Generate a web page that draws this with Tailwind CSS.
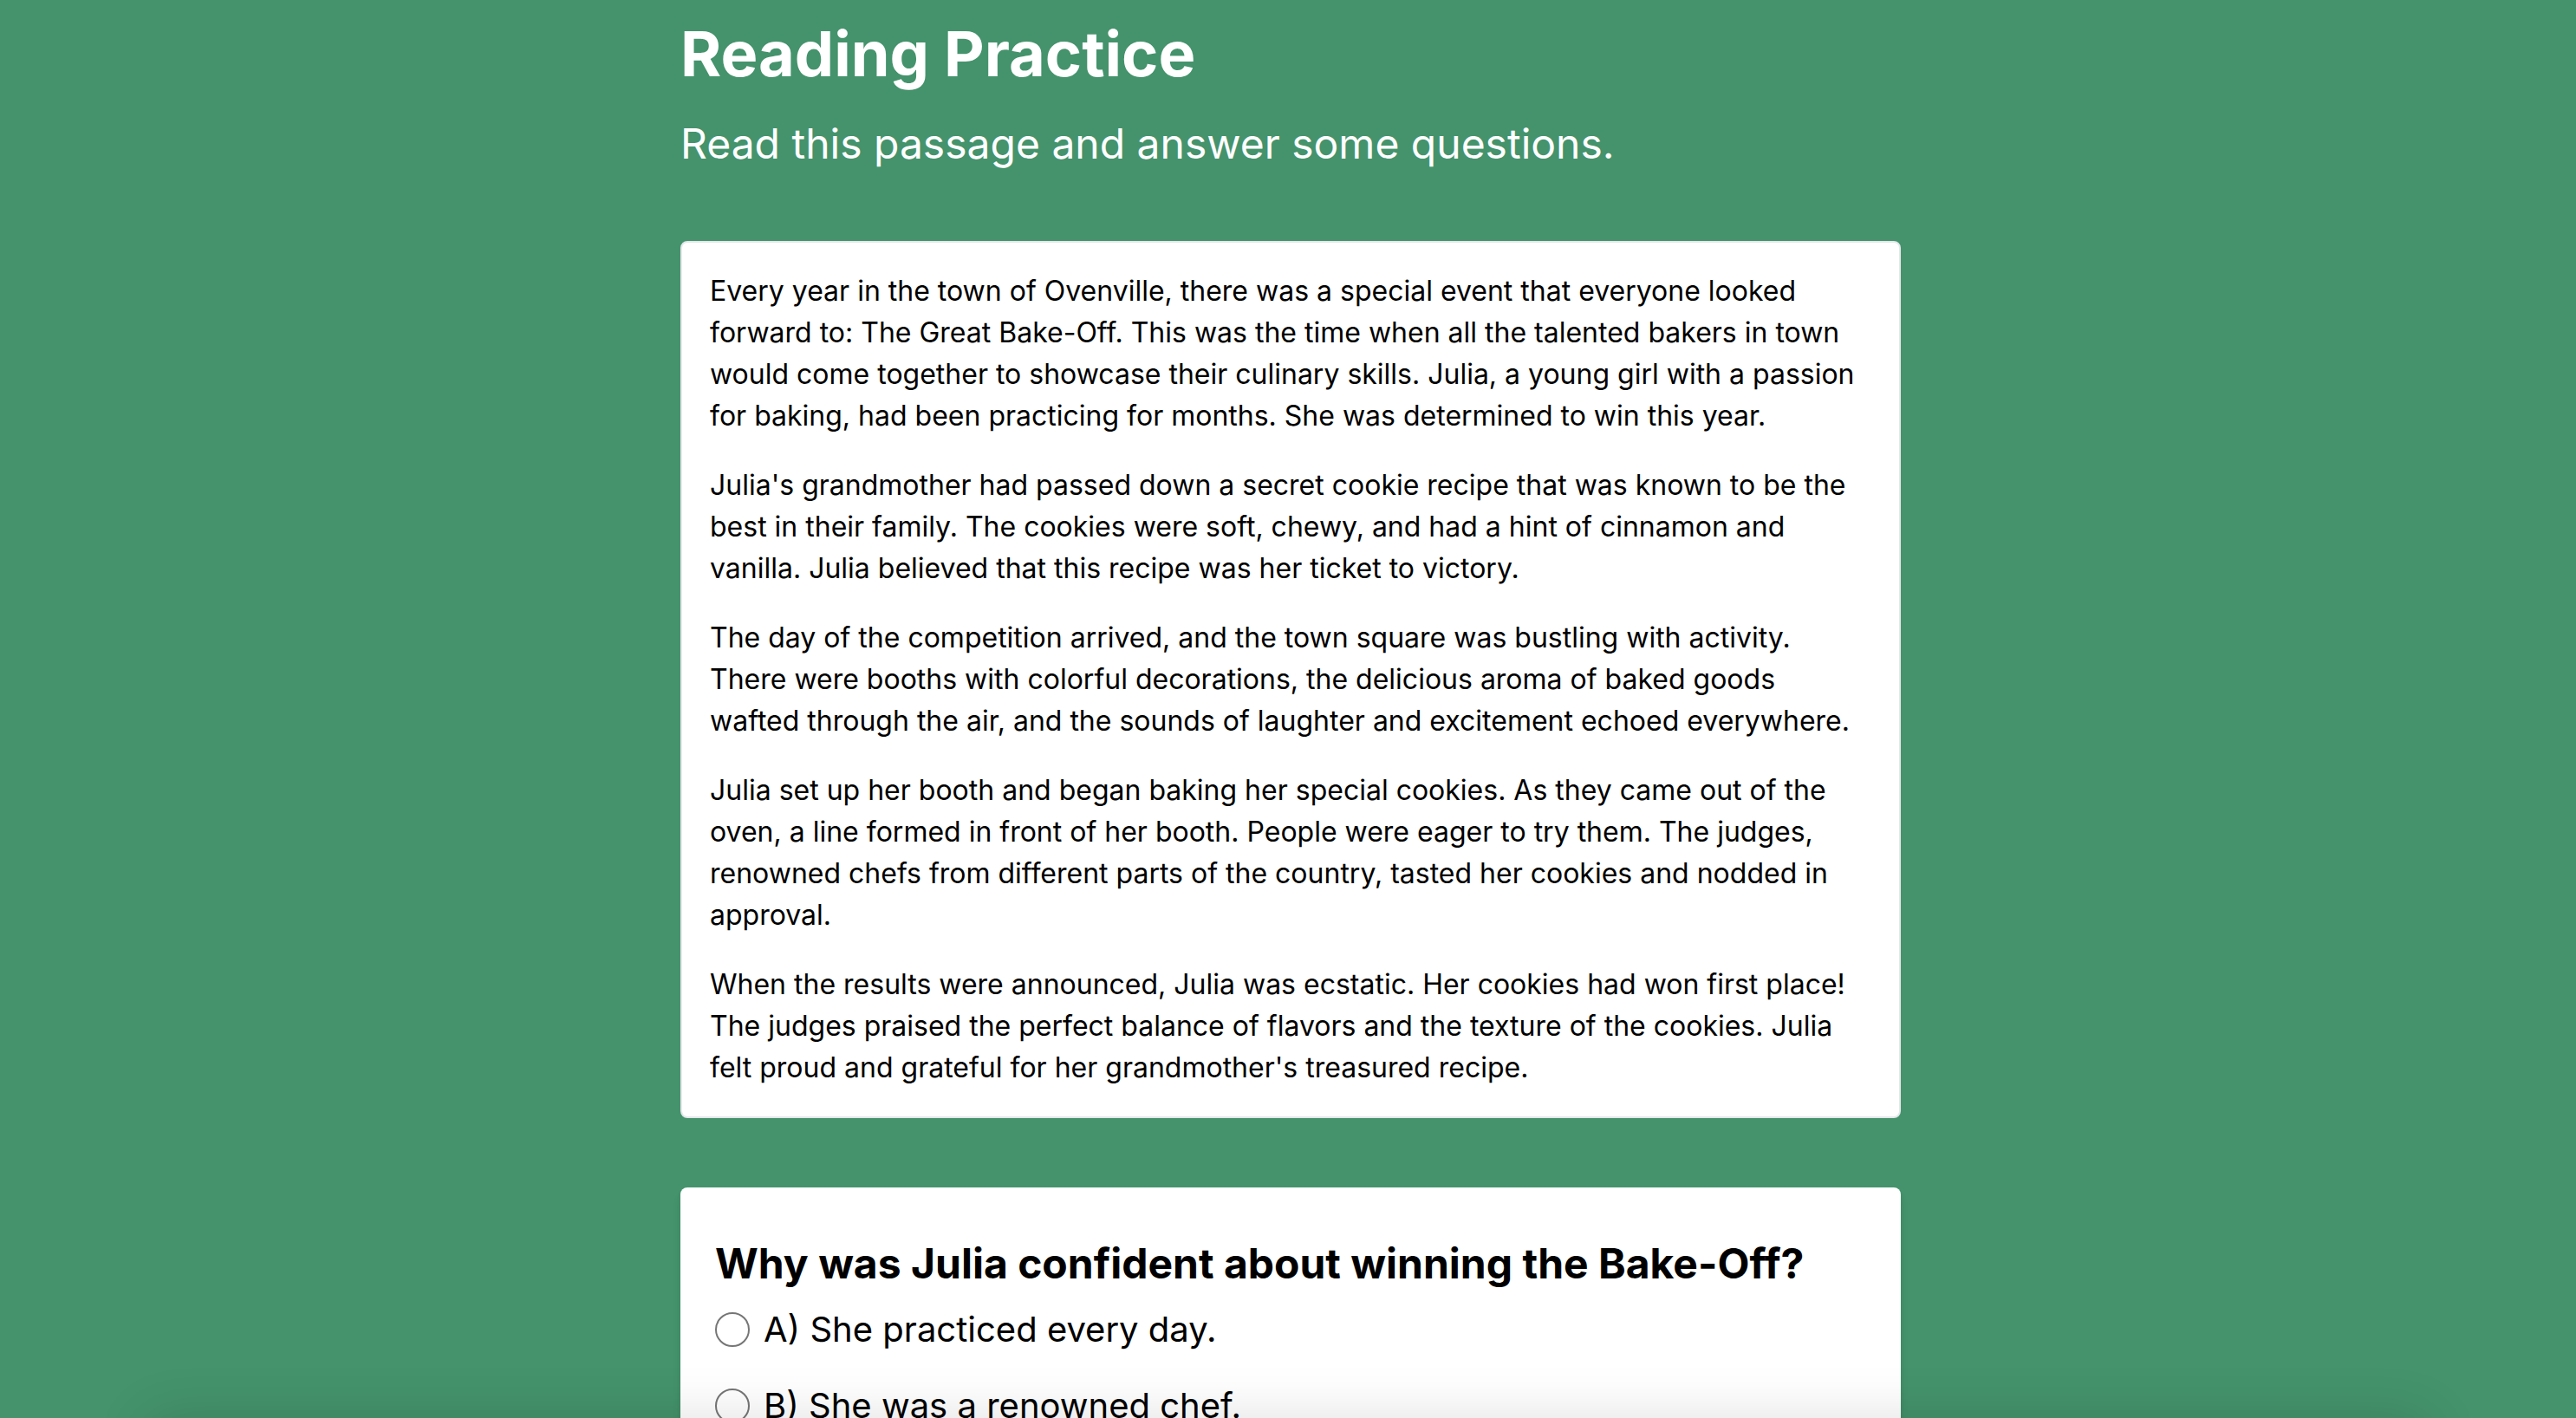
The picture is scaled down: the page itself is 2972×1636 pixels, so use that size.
<!DOCTYPE html>
<html lang="en">
<head>
<meta charset="utf-8">
<title>Reading Practice</title>
<script src="https://cdn.jsdelivr.net/npm/@tailwindcss/browser@4"></script>
</head>
<body class="h-screen overflow-hidden bg-[#44936c] pl-1.5 font-['Inter',sans-serif] text-black">
<main class="mx-auto max-w-[1408px] pt-4">
<header class="text-white">
<h1 class="text-[72px] leading-[92px] font-bold">Reading Practice</h1>
<p class="mt-4 text-[48px] leading-[84px]">Read this passage and answer some questions.</p>
</header>
<article class="mt-[70px] space-y-8 rounded-lg border-2 border-gray-200 bg-white p-8 text-[32px] leading-[48px]">
<p>Every year in the town of Ovenville, there was a special event that everyone looked forward to: The Great Bake-Off. This was the time when all the talented bakers in town would come together to showcase their culinary skills. Julia, a young girl with a passion for baking, had been practicing for months. She was determined to win this year.</p>
<p>Julia's grandmother had passed down a secret cookie recipe that was known to be the best in their family. The cookies were soft, chewy, and had a hint of cinnamon and vanilla. Julia believed that this recipe was her ticket to victory.</p>
<p>The day of the competition arrived, and the town square was bustling with activity. There were booths with colorful decorations, the delicious aroma of baked goods wafted through the air, and the sounds of laughter and excitement echoed everywhere.</p>
<p>Julia set up her booth and began baking her special cookies. As they came out of the oven, a line formed in front of her booth. People were eager to try them. The judges, renowned chefs from different parts of the country, tasted her cookies and nodded in approval.</p>
<p>When the results were announced, Julia was ecstatic. Her cookies had won first place! The judges praised the perfect balance of flavors and the texture of the cookies. Julia felt proud and grateful for her grandmother's treasured recipe.</p>
</article>
<section class="mt-20 rounded-lg bg-white p-10 shadow-[0_8px_12px_-2px_rgb(0_0_0/0.1),0_4px_8px_-2px_rgb(0_0_0/0.06)]">
<h2 id="question" class="mt-4 text-[48px] leading-[64px] font-bold">Why was Julia confident about winning the Bake-Off?</h2>
<div role="radiogroup" aria-labelledby="question">
<label class="flex h-[88px] items-center gap-4 text-[40px]"><input type="radio" name="answer" class="size-10 appearance-none rounded-full border-2 border-[#767676] bg-white">A) She practiced every day.</label>
<label class="flex h-[88px] items-center gap-4 text-[40px]"><input type="radio" name="answer" class="size-10 appearance-none rounded-full border-2 border-[#767676] bg-white">B) She was a renowned chef.</label>
</div>
</section>
</main>
<!-- soft shadow rising from the bottom edge of the window -->
<div class="pointer-events-none fixed inset-x-[170px] top-full h-40 rounded-2xl shadow-[0_0_64px_rgb(0_0_0/0.13)]"></div>
</body>
</html>
